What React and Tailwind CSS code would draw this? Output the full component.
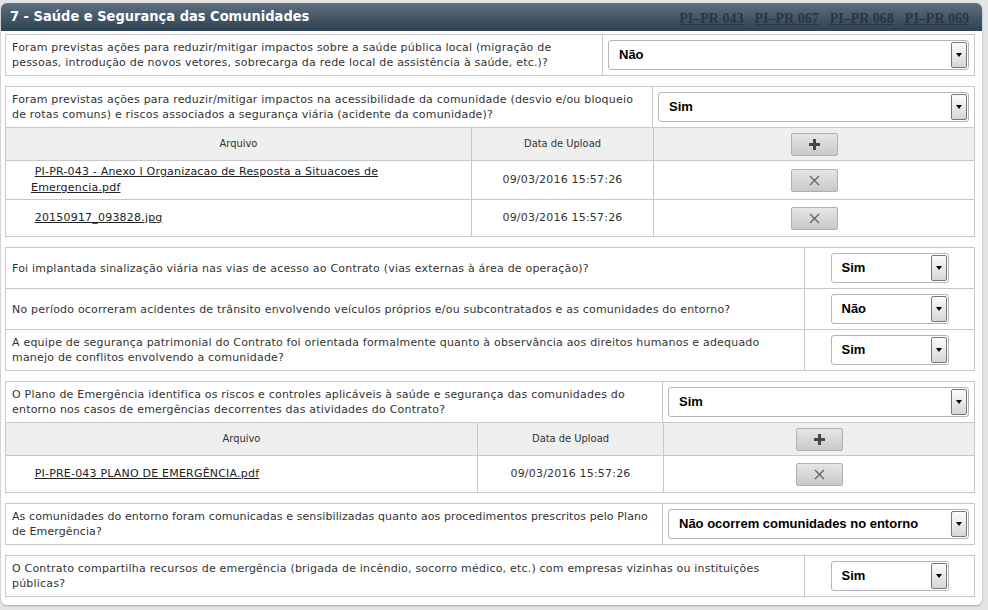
import React from 'react'

const body = { fontFamily: '"DejaVu Sans", Verdana, sans-serif' }

function Select({ value, className = '' }) {
  return (
    <div className={`relative h-[30px] flex items-center rounded-[3px] border border-[#b5b5b5] bg-white ${className}`}>
      <span className="pl-[10px] text-[13px] font-bold text-black tracking-normal" style={{ fontFamily: '"Liberation Sans", Arial, sans-serif' }}>
        {value}
      </span>
      <div className="absolute right-[1px] top-[1px] bottom-[1px] w-[16px] border border-[#777] rounded-[2px] bg-gradient-to-b from-[#fdfdfd] to-[#d6d6d6] flex items-center justify-center">
        <div className="w-0 h-0 border-l-[3px] border-r-[3px] border-t-[4px] border-l-transparent border-r-transparent border-t-black" />
      </div>
    </div>
  )
}

function IconButton({ kind }) {
  return (
    <div className="w-[47px] h-[23px] rounded-[2px] border border-[#b0b0b0] bg-gradient-to-b from-[#e6e6e6] to-[#c9c9c9] flex items-center justify-center">
      {kind === 'plus' ? (
        <svg width="11" height="11" viewBox="0 0 11 11">
          <path d="M4 0h3v4h4v3H7v4H4V7H0V4h4z" fill="#444" />
        </svg>
      ) : (
        <svg width="11" height="11" viewBox="0 0 11 11">
          <path d="M1 1L10 10M10 1L1 10" stroke="#666" strokeWidth="1.4" />
        </svg>
      )}
    </div>
  )
}

// split = x position of the column divider on the page
function QuestionRow({ text, value, split, wide, last, tight }) {
  return (
    <div className={`flex ${last ? '' : 'border-b border-[#c8c8c8]'}`}>
      <div className={`flex-1 min-h-[40px] flex items-center px-[6px] py-[4px] leading-[15px] ${tight ? 'tracking-[0.1px]' : ''}`}>
        {text}
      </div>
      <div
        className={`shrink-0 border-l border-[#c8c8c8] flex items-center ${wide ? 'px-[5px]' : 'justify-center'}`}
        style={{ width: 975 - split }}
      >
        <Select value={value} className={wide ? 'w-full' : 'w-[118px]'} />
      </div>
    </div>
  )
}

function FileTable({ files, split, cols }) {
  return (
    <div>
      <div className="flex h-[33px] bg-[#efefef] border-t border-[#c8c8c8] text-[11px] tracking-normal" style={{ fontFamily: 'Tahoma, "DejaVu Sans Condensed", sans-serif' }}>
        <div className="flex items-center justify-center" style={{ width: cols - 6 }}>Arquivo</div>
        <div className="flex items-center justify-center border-l border-[#c8c8c8]" style={{ width: split - cols }}>Data de Upload</div>
        <div className="flex-1 flex items-center justify-center border-l border-[#c8c8c8]">
          <IconButton kind="plus" />
        </div>
      </div>
      {files.map((f, i) => (
        <div key={i} className="flex min-h-[37px] border-t border-[#c8c8c8]">
          <div className="flex items-center pl-[25px] pr-[60px] py-[3px] leading-[16px]" style={{ width: cols - 6 }}>
            <p>
              {'\u00a0'}
              <span className="underline text-[#222]">{f.name}</span>
            </p>
          </div>
          <div className="flex items-center justify-center border-l border-[#c8c8c8]" style={{ width: split - cols }}>
            {f.date}
          </div>
          <div className="flex-1 flex items-center justify-center border-l border-[#c8c8c8]">
            <IconButton kind="x" />
          </div>
        </div>
      ))}
    </div>
  )
}

export default function App() {
  return (
    <div className="w-[988px] h-[610px] bg-[#e4e4e4] pt-[3px] text-[11px] tracking-[0.2px] text-[#333]" style={body}>
      <div className="ml-[1px] w-[981px] rounded-[6px] bg-white shadow-[0_1px_2px_rgba(0,0,0,0.25)] pb-[8px]">
        <div className="h-[28px] rounded-t-[6px] bg-gradient-to-b from-[#5f6f7e] to-[#2e4252] flex items-center justify-between pl-[9px] pr-[13px]">
          <h1 className="text-white text-[14.5px] font-bold tracking-normal" style={{ fontFamily: '"DejaVu Sans Condensed", Tahoma, sans-serif' }}>
            7 - Saúde e Segurança das Comunidades
          </h1>
          <div className="flex gap-[11px] text-[14px] font-bold text-[#2a3541] pt-[3px] tracking-normal" style={{ fontFamily: '"Liberation Serif", "Times New Roman", serif' }}>
            <span className="underline">PI–PR 043</span>
            <span className="underline">PI–PR 067</span>
            <span className="underline">PI–PR 068</span>
            <span className="underline">PI–PR 069</span>
          </div>
        </div>

        <div className="pl-[4px] pr-[7px] pt-[3px] flex flex-col gap-[10px]">
          <div className="border border-[#c8c8c8]">
            <QuestionRow
              split={603}
              wide
              last
              value="Não"
              text="Foram previstas ações para reduzir/mitigar impactos sobre a saúde pública local (migração de pessoas, introdução de novos vetores, sobrecarga da rede local de assistência à saúde, etc.)?"
            />
          </div>

          <div className="border border-[#c8c8c8]">
            <QuestionRow
              split={653}
              wide
              last
              value="Sim"
              text="Foram previstas ações para reduzir/mitigar impactos na acessibilidade da comunidade (desvio e/ou bloqueio de rotas comuns) e riscos associados a segurança viária (acidente da comunidade)?"
            />
            <FileTable
              split={653}
              cols={471}
              files={[
                { name: 'PI-PR-043 - Anexo I Organizacao de Resposta a Situacoes de Emergencia.pdf', date: '09/03/2016 15:57:26' },
                { name: '20150917_093828.jpg', date: '09/03/2016 15:57:26' },
              ]}
            />
          </div>

          <div className="border border-[#c8c8c8]">
            <QuestionRow
              split={805}
              value="Sim"
              text="Foi implantada sinalização viária nas vias de acesso ao Contrato (vias externas à área de operação)?"
            />
            <QuestionRow
              split={805}
              value="Não"
              text="No período ocorreram acidentes de trânsito envolvendo veículos próprios e/ou subcontratados e as comunidades do entorno?"
            />
            <QuestionRow
              split={805}
              last
              value="Sim"
              text="A equipe de segurança patrimonial do Contrato foi orientada formalmente quanto à observância aos direitos humanos e adequado manejo de conflitos envolvendo a comunidade?"
            />
          </div>

          <div className="border border-[#c8c8c8]">
            <QuestionRow
              split={663}
              wide
              last
              value="Sim"
              text="O Plano de Emergência identifica os riscos e controles aplicáveis à saúde e segurança das comunidades do entorno nos casos de emergências decorrentes das atividades do Contrato?"
            />
            <FileTable
              split={663}
              cols={477}
              files={[{ name: 'PI-PRE-043 PLANO DE EMERGÊNCIA.pdf', date: '09/03/2016 15:57:26' }]}
            />
          </div>

          <div className="border border-[#c8c8c8]">
            <QuestionRow
              split={663}
              wide
              last
              tight
              value="Não ocorrem comunidades no entorno"
              text="As comunidades do entorno foram comunicadas e sensibilizadas quanto aos procedimentos prescritos pelo Plano de Emergência?"
            />
          </div>

          <div className="border border-[#c8c8c8]">
            <QuestionRow
              split={805}
              last
              value="Sim"
              text="O Contrato compartilha recursos de emergência (brigada de incêndio, socorro médico, etc.) com empresas vizinhas ou instituições públicas?"
            />
          </div>
        </div>
      </div>
    </div>
  )
}
